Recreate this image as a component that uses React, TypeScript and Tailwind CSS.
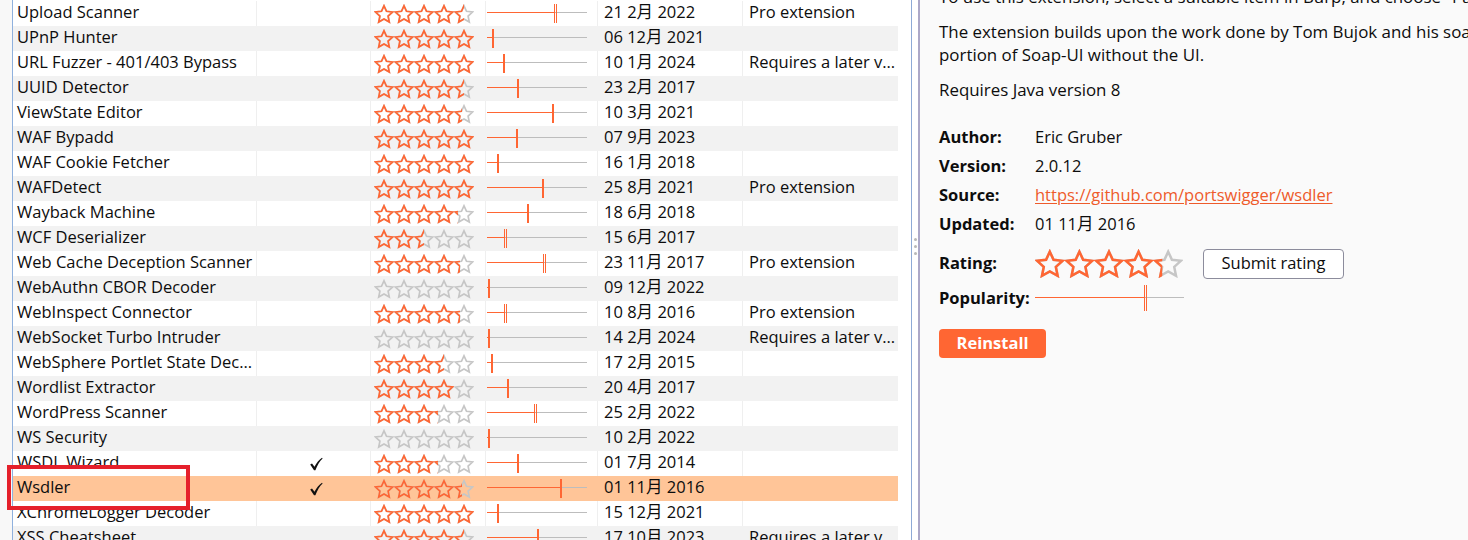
import { useId } from 'react'

interface Row {
  name: string
  installed?: boolean
  rating: number
  pop: number
  dbl?: boolean
  date: string
  detail?: string
  selected?: boolean
}

const rows: Row[] = [
  { name: 'Upload Scanner', rating: 4.5, pop: 67, dbl: true, date: '21 2月 2022', detail: 'Pro extension' },
  { name: 'UPnP Hunter', rating: 5, pop: 5, date: '06 12月 2021' },
  { name: 'URL Fuzzer - 401/403 Bypass', rating: 5, pop: 16, date: '10 1月 2024', detail: 'Requires a later v...' },
  { name: 'UUID Detector', rating: 4.5, pop: 30, date: '23 2月 2017' },
  { name: 'ViewState Editor', rating: 4.4, pop: 65, date: '10 3月 2021' },
  { name: 'WAF Bypadd', rating: 5, pop: 29, date: '07 9月 2023' },
  { name: 'WAF Cookie Fetcher', rating: 5, pop: 10, date: '16 1月 2018' },
  { name: 'WAFDetect', rating: 5, pop: 55, date: '25 8月 2021', detail: 'Pro extension' },
  { name: 'Wayback Machine', rating: 4.2, pop: 40, date: '18 6月 2018' },
  { name: 'WCF Deserializer', rating: 2.5, pop: 17, dbl: true, date: '15 6月 2017' },
  { name: 'Web Cache Deception Scanner', rating: 4.3, pop: 56, dbl: true, date: '23 11月 2017', detail: 'Pro extension' },
  { name: 'WebAuthn CBOR Decoder', rating: 0, pop: 1, date: '09 12月 2022' },
  { name: 'WebInspect Connector', rating: 4.3, pop: 17, dbl: true, date: '10 8月 2016', detail: 'Pro extension' },
  { name: 'WebSocket Turbo Intruder', rating: 0, pop: 1, date: '14 2月 2024', detail: 'Requires a later v...' },
  { name: 'WebSphere Portlet State Dec...', rating: 3.5, pop: 4, date: '17 2月 2015' },
  { name: 'Wordlist Extractor', rating: 4, pop: 20, date: '20 4月 2017' },
  { name: 'WordPress Scanner', rating: 3.2, pop: 47, dbl: true, date: '25 2月 2022' },
  { name: 'WS Security', rating: 0, pop: 1, date: '10 2月 2022' },
  { name: 'WSDL Wizard', installed: true, rating: 3.2, pop: 30, date: '01 7月 2014' },
  { name: 'Wsdler', installed: true, rating: 4.4, pop: 73, date: '01 11月 2016', selected: true },
  { name: 'XChromeLogger Decoder', rating: 5, pop: 10, date: '15 12月 2021' },
  { name: 'XSS Cheatsheet', rating: 4.5, pop: 50, date: '17 10月 2023', detail: 'Requires a later v...' },
]

const STAR = '10,1.8 12.53,7.32 18.56,8.02 14.09,12.13 15.29,18.08 10,15.1 4.71,18.08 5.91,12.13 1.44,8.02 7.47,7.32'

function Stars({ rating, width }: { rating: number; width: number }) {
  const id = useId().replace(/:/g, '')
  const stars = [0, 1, 2, 3, 4]
  return (
    <svg width={width} height={width / 5} viewBox="0 0 100 20" className="block">
      <defs>
        <clipPath id={`clip${id}`}>
          <rect x="0" y="0" width={rating * 20} height="20" />
        </clipPath>
      </defs>
      {stars.map((i) => (
        <polygon key={i} points={STAR} transform={`translate(${i * 20} 0)`} fill="none" stroke="#c6c6c6" strokeWidth={1.7} />
      ))}
      <g clipPath={`url(#clip${id})`}>
        {stars.map((i) => (
          <polygon key={i} points={STAR} transform={`translate(${i * 20} 0)`} fill="none" stroke="#ff6633" strokeWidth={1.7} />
        ))}
      </g>
    </svg>
  )
}

function Popularity({ pos, dbl, width, height }: { pos: number; dbl?: boolean; width: number; height: number }) {
  const mid = Math.floor(height / 2) - 1
  return (
    <svg width={width} height={height} className="block">
      <rect x="0" y={mid} width={width} height="1" fill="#bdbdbd" />
      <rect x="0" y={mid} width={pos} height="1" fill="#ff6633" />
      {dbl ? (
        <>
          <rect x={pos} y="1" width="1" height={height - 2} fill="#ff6633" />
          <rect x={pos + 2} y="1" width="1" height={height - 2} fill="#ff6633" />
        </>
      ) : (
        <rect x={pos} y="1" width="2" height={height - 2} fill="#ff6633" />
      )}
    </svg>
  )
}

function Check() {
  return (
    <svg width="14" height="14" viewBox="0 0 14 14" className="block">
      <path d="M1.2 7.6 L3 6.4 L5.5 9.7 C7.5 5.9 10 3 13 0.8 L13.6 1.6 C10.6 4.4 8.3 8.4 6.4 13.2 L5 13.2 Z" fill="#111" />
    </svg>
  )
}

function TableRow({ row, index }: { row: Row; index: number }) {
  const bg = row.selected ? 'bg-[#ffc598]' : index % 2 === 1 ? 'bg-[#f2f2f2]' : 'bg-white'
  const line = row.selected || index % 2 === 1 ? 'border-transparent' : 'border-[#efefef]'
  return (
    <div className={`flex h-[25px] items-center ${bg}`}>
      <div className={`flex h-full w-[244px] items-center overflow-hidden whitespace-nowrap border-r pb-[3px] pl-[4px] ${line}`}>
        {row.name}
      </div>
      <div className={`flex h-full w-[114px] items-center border-r pl-[52px] ${line}`}>
        {row.installed && <Check />}
      </div>
      <div className={`flex h-full w-[115px] items-center border-r pl-[3px] ${line}`}>
        <Stars rating={row.rating} width={100} />
      </div>
      <div className={`flex h-full w-[112px] items-center border-r pl-px ${line}`}>
        <Popularity pos={row.pop} dbl={row.dbl} width={100} height={21} />
      </div>
      <div className={`flex h-full w-[145px] items-center whitespace-nowrap border-r pb-[3px] pl-[6px] ${line}`}>
        {row.date}
      </div>
      <div className="flex h-full w-[155px] items-center overflow-hidden whitespace-nowrap pb-[3px] pl-[6px]">
        {row.detail}
      </div>
    </div>
  )
}

function InfoRow({ label, children }: { label: string; children: React.ReactNode }) {
  return (
    <div className="flex h-[29px] items-center">
      <span className="w-[96px] font-bold">{label}</span>
      {children}
    </div>
  )
}

export default function App() {
  return (
    <div className="relative flex h-[540px] w-[1468px] overflow-hidden bg-white font-['Open_Sans','Noto_Sans_CJK_SC',sans-serif] text-[16.5px] text-[#0d0d0d]">
      <div className="w-[12px] shrink-0 bg-[#f8f8f8]" />
      <div className="w-px shrink-0 bg-[#8fb1de]" />

      {/* extension list */}
      <div className="w-[885px] shrink-0 pt-px leading-[22px]">
        {rows.map((row, i) => (
          <TableRow key={row.name} row={row} index={i} />
        ))}
      </div>

      {/* split pane divider */}
      <div className="w-[13px] shrink-0 bg-white" />
      <div className="w-px shrink-0 bg-[#8eaad6]" />
      <div className="flex w-[6px] shrink-0 flex-col items-center gap-[4px] bg-white pt-[238px]">
        <div className="h-[3px] w-[3px] rounded-full bg-[#b8b8b8]" />
        <div className="h-[3px] w-[3px] rounded-full bg-[#b8b8b8]" />
        <div className="h-[3px] w-[3px] rounded-full bg-[#b8b8b8]" />
      </div>
      <div className="w-[2px] shrink-0 bg-[#aca8c8]" />

      {/* detail pane */}
      <div className="min-w-0 flex-1 overflow-hidden bg-[#fafafa] pl-[19px]">
        <div className="mt-[-15px] whitespace-nowrap text-[16.9px] leading-[23px]">
          <p>To use this extension, select a suitable item in Burp, and choose "Parse WSDL" from the context menu.</p>
          <p className="mt-3">
            The extension builds upon the work done by Tom Bujok and his soap-ws project, which is essentially the WSDL parsing
            <br />
            portion of Soap-UI without the UI.
          </p>
          <p className="mt-3">Requires Java version 8</p>
        </div>

        <div className="mt-[22px]">
          <InfoRow label="Author:">Eric Gruber</InfoRow>
          <InfoRow label="Version:">2.0.12</InfoRow>
          <InfoRow label="Source:">
            <span className="text-[#ee5b2b] underline underline-offset-2">https://github.com/portswigger/wsdler</span>
          </InfoRow>
          <InfoRow label="Updated:">01 11月 2016</InfoRow>
          <div className="mt-[9px] flex h-[31px] items-center">
            <span className="w-[96px] font-bold">Rating:</span>
            <Stars rating={4.3} width={148} />
            <button className="ml-[20px] h-[30px] w-[141px] rounded-[4px] border border-[#8c8c9c] bg-white">
              Submit rating
            </button>
          </div>
          <div className="mt-[5px] flex h-[28px] items-center">
            <span className="w-[96px] font-bold">Popularity:</span>
            <Popularity pos={109} dbl width={149} height={28} />
          </div>
          <button className="mt-[17px] h-[29px] w-[107px] rounded-[4px] bg-[#ff6633] font-bold text-white">Reinstall</button>
        </div>
      </div>

      {/* annotation box */}
      <div className="absolute left-[7px] top-[465px] h-[45px] w-[183px] border-4 border-[#e5202b]" />
    </div>
  )
}
